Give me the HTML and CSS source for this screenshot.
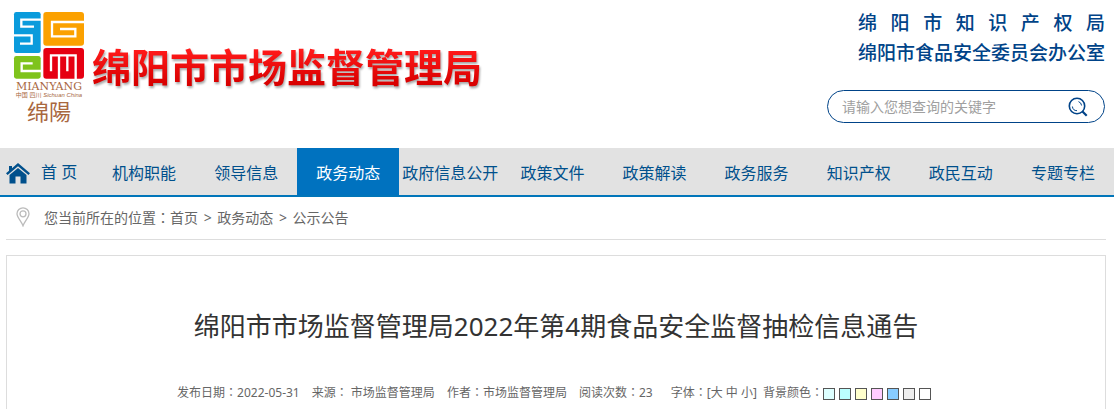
FILE: index.html
```html
<!DOCTYPE html>
<html lang="zh-CN">
<head>
<meta charset="utf-8">
<title>绵阳市市场监督管理局</title>
<link rel="stylesheet" href="styles.css">
</head>
<body>
<header class="header">
  <div class="brand">
    <svg class="logo" viewBox="0 0 76 116" role="img" aria-label="绵阳">
      <g transform="translate(-12 -10) scale(.33333)" fill="none" stroke="#fff" stroke-width="7">
        <rect x="42" y="36" width="80" height="123" rx="7" fill="#0a9bdc" stroke="none"/>
        <path d="M124 59H64V80H102M40 106H95V131H60"/>
        <rect x="130" y="36" width="122" height="101" rx="9" fill="#fba100" stroke="none"/>
        <path d="M254 66H156V109H226V87H180"/>
        <rect x="42" y="168" width="80" height="68" rx="7" fill="#7fc31c" stroke="none"/>
        <path d="M124 213H65V190H98"/>
        <rect x="130" y="144" width="122" height="92" rx="9" fill="#e60012" stroke="none"/>
        <path d="M153 214V166H177V238M202 168V214M177 166H227V238"/>
      </g>
      <text class="logo-latin" x="37" y="80">MIANYANG</text>
      <text class="logo-small" x="37" y="87">中国 四川 <tspan font-style="italic">Sichuan China</tspan></text>
      <text class="logo-script" x="37" y="110">绵陽</text>
    </svg>
    <h1 class="site-name">绵阳市市场监督管理局</h1>
  </div>
  <div class="header-side">
    <div class="offices">
      <p>绵阳市知识产权局</p>
      <p>绵阳市食品安全委员会办公室</p>
    </div>
    <form class="search">
      <input type="text" aria-label="搜索" placeholder="请输入您想查询的关键字">
      <button type="button" aria-label="查询">
        <svg viewBox="0 0 20 20" fill="none" stroke="#004388"><circle cx="9" cy="9" r="7.7" stroke-width="1.6"/><path d="M14.5 14.5L18.7 18.7" stroke-width="2.2"/><path d="M4.4 9.5A4.7 4.7 0 0 0 9 13.7M13.6 8.5A4.7 4.7 0 0 0 10.5 4.6" stroke-width="1"/></svg>
      </button>
    </form>
  </div>
</header>
<nav class="nav">
  <a class="home" href="#"><svg viewBox="0 0 24 21" fill="#00508c"><path d="M12 0L24 10.3L22.4 12L12 3.2L1.6 12L0 10.3L3 7.7V3H6V5.2Z"/><path d="M12 5L20.5 12V20.5H14.5V13.5H9.5V20.5H3.5V12Z"/></svg><span>首 页</span></a>
  <a href="#">机构职能</a>
  <a href="#">领导信息</a>
  <a class="active" href="#">政务动态</a>
  <a href="#">政府信息公开</a>
  <a href="#">政策文件</a>
  <a href="#">政策解读</a>
  <a href="#">政务服务</a>
  <a href="#">知识产权</a>
  <a href="#">政民互动</a>
  <a href="#">专题专栏</a>
</nav>
<div class="crumbs">
  <svg viewBox="0 0 14 20" fill="none" stroke="#bbb" stroke-width="1.3"><path d="M7 18.8C5.5 14.5 1 10.5 1 6.8A6 6 0 0 1 13 6.8C13 10.5 8.5 14.5 7 18.8Z"/><circle cx="7" cy="6.8" r="3"/></svg>
  <p>您当前所在的位置<span class="colon" lang="zh-TW">：</span><a href="#">首页</a> <span class="sep">&gt;</span> <a href="#">政务动态</a> <span class="sep">&gt;</span> <a href="#">公示公告</a></p>
</div>
<main class="article">
  <h2>绵阳市市场监督管理局2022年第4期食品安全监督抽检信息通告</h2>
  <div class="meta">
    <span>发布日期<span class="colon" lang="zh-TW">：</span>2022-05-31</span>
    <span>来源<span class="colon" lang="zh-TW">：</span> 市场监督管理局</span>
    <span>作者<span class="colon" lang="zh-TW">：</span>市场监督管理局</span>
    <span>阅读次数<span class="colon" lang="zh-TW">：</span>23</span>
    <span class="tools">
      <span>字体<span class="colon" lang="zh-TW">：</span>[<a href="#">大</a> <a href="#">中</a> <a href="#">小</a>]</span>
      <span class="palette">
        <span>背景颜色<span class="colon" lang="zh-TW">：</span></span>
        <span class="swatches">
          <button type="button" class="swatch mist" aria-label="浅青"></button>
          <button type="button" class="swatch aqua" aria-label="青色"></button>
          <button type="button" class="swatch cream" aria-label="黄色"></button>
          <button type="button" class="swatch pink" aria-label="粉色"></button>
          <button type="button" class="swatch sky" aria-label="蓝色"></button>
          <button type="button" class="swatch grey" aria-label="灰色"></button>
          <button type="button" class="swatch white" aria-label="白色"></button>
        </span>
      </span>
    </span>
  </div>
</main>
</body>
</html>
```
FILE: styles.css
```css
* { box-sizing: border-box; }
body {
  margin: 0;
  background: #fff;
  color: #666;
  font-family: "Noto Sans", "Noto Sans CJK SC", sans-serif;
  font-size: 14px;
}
h1, h2, p { margin: 0; }
a { color: inherit; text-decoration: none; }
.colon { font-family: "Noto Sans CJK TC", sans-serif; }

.header {
  display: flex;
  justify-content: space-between;
  height: 148px;
  padding: 8px 9px 0 12px;
}
.brand { display: flex; }
.logo { width: 76px; height: 116px; margin-top: 2px; }
.logo text { text-anchor: middle; fill: #a9683f; }
.logo .logo-latin { font: 11px "DejaVu Serif", serif; }
.logo .logo-small { font: 6px "Liberation Sans", "Noto Sans CJK SC", sans-serif; }
.logo .logo-script { font: 22px "Noto Sans CJK TC", serif; }
.site-name {
  margin: 31px 0 0 4px;
  height: 56px;
  line-height: 56px;
  font-size: 39px;
  font-weight: 700;
  color: transparent;
  background: linear-gradient(#ff1a1a 20%, #d80000 80%);
  -webkit-background-clip: text;
  background-clip: text;
  filter: drop-shadow(1px 2px 1px rgba(0, 0, 0, .35));
}
.header-side {
  display: flex;
  flex-direction: column;
  align-items: flex-end;
}
.offices {
  color: #004388;
  font-size: 19px;
  font-weight: 500;
  line-height: 30px;
}
.offices p { text-align-last: justify; }
.search {
  display: flex;
  align-items: center;
  width: 278px;
  height: 33px;
  margin-top: 22px;
  padding: 0 16px 0 14px;
  border: 1px solid #004388;
  border-radius: 17px;
}
.search input {
  flex: 1;
  min-width: 0;
  padding: 0;
  border: 0;
  outline: 0;
  background: none;
  font: inherit;
}
.search input::placeholder { color: #a0a0a0; }
.search button {
  width: 20px;
  height: 20px;
  padding: 0;
  border: 0;
  background: none;
}
.search svg { display: block; }

.nav {
  display: flex;
  height: 49px;
  border-bottom: 2px solid #0075b9;
  background: #e2e2e2;
  color: #00508c;
  font-size: 16px;
  line-height: 50px;
}
.nav a { flex: 1 0 0; text-align: center; white-space: nowrap; }
.nav .home {
  display: flex;
  flex: 0 0 93px;
  align-items: center;
  gap: 11px;
  padding-left: 6px;
}
.nav svg { width: 24px; height: 21px; margin-top: 3px; }
.nav .active { background: #0072bf; color: #fff; }

.crumbs {
  display: flex;
  align-items: center;
  gap: 14px;
  height: 43px;
  margin: 0 8px 0 6px;
  padding: 0 0 2px 10px;
  border-bottom: 1px solid #ddd;
}
.crumbs svg { width: 14px; height: 20px; }
.sep { margin: 0 2px; }

.article {
  margin: 15px 8px 0 6px;
  padding-bottom: 7px;
  border: 1px solid #ddd;
  border-bottom: 0;
  text-align: center;
}
.article h2 {
  padding-top: 50px;
  color: #333;
  font-size: 26px;
  font-weight: 400;
  line-height: 40px;
}
.meta {
  display: flex;
  justify-content: center;
  gap: 12px;
  margin-top: 36px;
  padding-right: 4px;
  font-size: 12px;
  line-height: 20px;
}
.tools { display: flex; gap: 6px; padding-left: 6px; }
.palette { display: flex; }
.swatches { display: flex; align-items: center; gap: 4px; padding-top: 2px; }
.swatch {
  width: 12px;
  height: 12px;
  padding: 0;
  border: 1px solid #555;
}
.mist { background: #dff; }
.aqua { background: #bff; }
.cream { background: #ffc; }
.pink { background: #fcf; }
.sky { background: #8cf; }
.grey { background: #eee; }
.white { background: #fff; }
```
